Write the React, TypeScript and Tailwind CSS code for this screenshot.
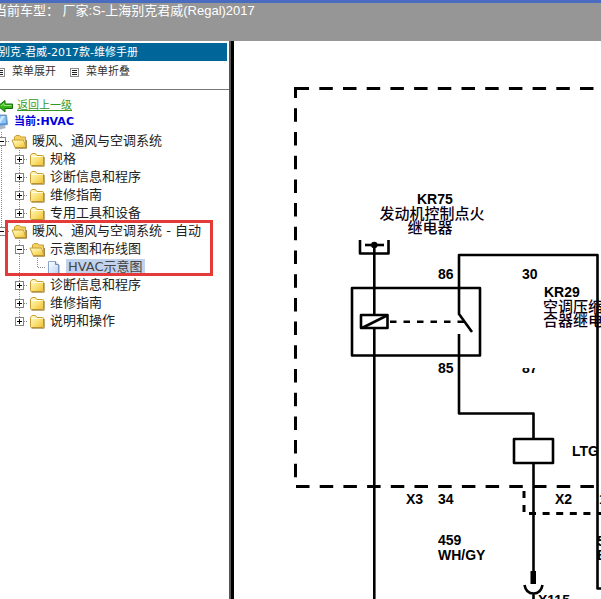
type Line = 'none' | 'full' | 'tee' | 'elbow';
type NodeKind = 'open' | 'closed';

function Cell({ line, toggle }: { line: Line; toggle?: 'plus' | 'minus' }) {
  return (
    <svg width="18" height="18" viewBox="0 0 18 18" shapeRendering="crispEdges" className="shrink-0" aria-hidden="true">
      <g stroke="#8a8a8a" strokeDasharray="1 1" fill="none">
        {line !== 'none' && <path d={line === 'elbow' ? 'M9.5 0V9' : 'M9.5 0V18'} />}
        {(line === 'tee' || line === 'elbow') && <path d="M10 9.5H18" />}
      </g>
      {toggle && (
        <>
          <rect x="5.5" y="5.5" width="8" height="8" fill="#fff" stroke="#848484" />
          <path d="M7 9.5H12" stroke="#000" />
          {toggle === 'plus' && <path d="M9.5 7V12" stroke="#000" />}
        </>
      )}
    </svg>
  );
}

function FolderIcon({ kind }: { kind: NodeKind }) {
  return (
    <svg width="18" height="18" viewBox="0 0 18 18" className="shrink-0" aria-hidden="true">
      <defs>
        <linearGradient id="folder" x1="0" y1="0" x2="1" y2="1">
          <stop offset="0" stopColor="#fffbd0" />
          <stop offset="0.5" stopColor="#fbe37a" />
          <stop offset="1" stopColor="#efc02f" />
        </linearGradient>
      </defs>
      {kind === 'closed' ? (
        <>
          <path d="M2.500 5.5L4 3.500H7.5L9 5.5H14.500Q15.500 5.5 15.500 6.5V14.500Q15.500 15.500 14.500 15.500H3.500Q2.500 15.500 2.500 14.500Z" fill="url(#folder)" stroke="#c79e38" />
          <path d="M3.500 6.500H14.500" stroke="#fffde6" />
          <path d="M3.500 16.200H16.200V7" stroke="#8a6a1c" fill="none" strokeWidth="0.8" />
        </>
      ) : (
        <>
          <path d="M4.500 14V5L6 3.500H9.500L11 5H15.500V8" fill="#f3d060" stroke="#c79e38" />
          <path d="M15.500 7.500V15" stroke="#c79e38" />
          <path d="M2 8H13.500L16 15.500H5Z" fill="url(#folder)" stroke="#c79e38" strokeLinejoin="round" />
          <path d="M5 16.300H16.500V8" stroke="#8a6a1c" fill="none" strokeWidth="0.8" />
        </>
      )}
    </svg>
  );
}

function PageIcon() {
  return (
    <svg width="18" height="18" viewBox="0 0 18 18" className="shrink-0" aria-hidden="true">
      <defs>
        <linearGradient id="page" x1="0" y1="0" x2="1" y2="1">
          <stop offset="0" stopColor="#ffffff" />
          <stop offset="1" stopColor="#bcd4f4" />
        </linearGradient>
      </defs>
      <path d="M2.5 3.5H9.5L12.5 6.5V15.5H2.5Z" fill="url(#page)" stroke="#8ba6cf" />
      <path d="M9.5 3.5V6.5H12.5" fill="#dfeafc" stroke="#6885b8" />
      <path d="M2.5 16H13V7" fill="none" stroke="#5f79a8" strokeWidth="0.8" />
    </svg>
  );
}

function ListIcon() {
  return (
    <svg width="9" height="9" viewBox="0 0 9 9" shapeRendering="crispEdges" className="shrink-0" aria-hidden="true">
      <rect x="0.5" y="0.5" width="8" height="8" fill="#fff" stroke="#8c8c8c" />
      <path d="M2 2.5H7M2 4.5H7M2 6.5H7" stroke="#222" />
    </svg>
  );
}

function RootRow({ label, last }: { label: string; last?: boolean }) {
  return (
    <div className="flex items-center">
      <button type="button" aria-label={label} className="shrink-0">
        <Cell line={last ? 'elbow' : 'tee'} toggle="minus" />
      </button>
      <FolderIcon kind="open" />
      <a href="#" className="ml-1 whitespace-nowrap">{label}</a>
    </div>
  );
}

function ChildRow({ label, rail, last, open }: { label: string; rail: Line; last?: boolean; open?: boolean }) {
  return (
    <div className="flex items-center">
      <Cell line={rail} />
      <button type="button" aria-label={label} className="shrink-0">
        <Cell line={last ? 'elbow' : 'tee'} toggle={open ? 'minus' : 'plus'} />
      </button>
      <FolderIcon kind={open ? 'open' : 'closed'} />
      <a href="#" className="ml-1 whitespace-nowrap">{label}</a>
    </div>
  );
}

const hvacChildren = ['规格', '诊断信息和程序', '维修指南', '专用工具和设备'];
const autoChildren = ['诊断信息和程序', '维修指南', '说明和操作'];

function Sidebar() {
  return (
    <aside className="w-[229px] shrink-0 overflow-hidden bg-white font-['DejaVu_Sans','Noto_Sans_CJK_SC',sans-serif] text-[11px] leading-4 text-[#333]">
      <div className="mt-0.5 mr-0.5 h-[18px] bg-[#006699] leading-5 text-white">
        <h1 className="-ml-px whitespace-nowrap">别克-君威-2017款-维修手册</h1>
      </div>
      <div className="-ml-1 flex h-[29px] items-center gap-3.5 border-b border-[#777] pb-1.5 whitespace-nowrap">
        <button type="button" className="flex items-center gap-[7px]">
          <ListIcon />
          菜单展开
        </button>
        <button type="button" className="flex items-center gap-[7px]">
          <ListIcon />
          菜单折叠
        </button>
      </div>

      <nav className="-ml-2 pt-2">
        <div className="flex items-center gap-1">
          <svg width="21" height="16" viewBox="0 0 21 16" aria-hidden="true">
            <path d="M6 8L13 2.5V6H20.500V10.500H13V14Z" fill="#35b515" stroke="#176b08" />
            <path d="M9 8L12 5.500V7.500H19.500" stroke="#9be77c" fill="none" />
          </svg>
          <a href="#" className="text-[#339922] underline">返回上一级</a>
        </div>
        <div className="flex items-center gap-1.5 font-bold text-[#0000dd]">
          <svg width="16" height="16" viewBox="0 0 16 16" aria-hidden="true">
            <path d="M1 1H14.500L15.500 10.500L9 12L1 11Z" fill="#4f95dd" stroke="#7d9cc4" />
            <path d="M2 2H13.500L14 9L2 10Z" fill="#8fc6f7" />
            <path d="M10 2H13L8 9.500H5Z" fill="#cde8ff" />
            <path d="M6 12L12 11L14 14L8 15.500Z" fill="#a9b6c8" />
          </svg>
          当前:HVAC
        </div>

        <div className="mt-0.5 text-[13px] leading-[18px] text-[#222]">
          <RootRow label="暖风、通风与空调系统" />
          {hvacChildren.map((label, i) => (
            <ChildRow key={label} label={label} rail="full" last={i === hvacChildren.length - 1} />
          ))}
          <div className="relative">
            <RootRow label="暖风、通风与空调系统 - 自动" last />
            <ChildRow label="示意图和布线图" rail="none" open />
            <div className="flex items-center">
              <Cell line="none" />
              <Cell line="full" />
              <Cell line="elbow" />
              <PageIcon />
              <a href="#" className="ml-0.5 h-4 bg-[#c0d2ec] px-0.5 leading-4 whitespace-nowrap text-[#444]">HVAC示意图</a>
            </div>
            <div className="pointer-events-none absolute -top-0.5 right-4 bottom-0 left-[13px] border-3 border-[#e53a3a]" />
          </div>
          {autoChildren.map((label, i) => (
            <ChildRow key={label} label={label} rail="none" last={i === autoChildren.length - 1} />
          ))}
        </div>
      </nav>
    </aside>
  );
}

function WiringDiagram() {
  return (
    <svg
      width="720"
      height="900"
      viewBox="234 41 720 900"
      role="img"
      aria-label="HVAC示意图"
      className="block max-w-none font-['Liberation_Sans','Noto_Sans_CJK_SC',sans-serif]"
    >
      <clipPath id="pin87">
        <rect x="515" y="368" width="40" height="8" />
      </clipPath>

      {/* module outline */}
      <g fill="none" stroke="#000" strokeWidth="3">
        <path d="M295.500 98V88.500H309" />
        <path d="M319.300 88.500H950" strokeDasharray="13.500 10.200" />
        <path d="M295.500 108.300V478" strokeDasharray="13.500 10.200" />
        <path d="M296 486.500H950" strokeDasharray="13.500 10.200" />
        <path d="M524 491V498M524 505V512" />
        <path d="M529 513.500H950" strokeDasharray="7 6.600" />
      </g>

      {/* wires */}
      <g fill="none" stroke="#000" strokeWidth="2.600" strokeLinejoin="round">
        <path d="M360 240V253.500H388.500V240" />
        <path d="M365 245H384" />
        <path d="M374.300 245V315M374.300 328V900" />
        <rect x="352" y="288" width="128" height="67.500" />
        <rect x="361" y="315" width="26.500" height="13" />
        <path d="M362 328L387 315.500" />
        <path d="M390 321.800H465" strokeDasharray="6.500 7" />
        <path d="M472 332L459 314V255H597.500V588.500H950" />
        <path d="M459 334V413.500H533.500V439" />
        <rect x="514" y="439" width="39" height="24" />
        <path d="M533.500 463V572" />
        <path d="M524.500 585Q526 593.500 533.500 593.500Q541 593.500 542.500 585M533.500 593V900" />
      </g>
      <circle cx="374.300" cy="245" r="3.200" />
      <rect x="530.500" y="571" width="5.500" height="13" />

      <g fontSize="14" fontWeight="700">
        <text x="417" y="204">KR75</text>
        <text x="438" y="279">86</text>
        <text x="522" y="279">30</text>
        <text x="544" y="297">KR29</text>
        <text x="438" y="373">85</text>
        <text x="522" y="373" clipPath="url(#pin87)">87</text>
        <text x="572" y="456">LTG</text>
        <text x="406" y="504">X3</text>
        <text x="438" y="504">34</text>
        <text x="555" y="504">X2</text>
        <text x="599" y="504">14</text>
        <text x="438" y="545">459</text>
        <text x="438" y="560">WH/GY</text>
        <text x="597" y="546">59</text>
        <text x="597" y="560">BK</text>
        <text x="538" y="605">X115</text>
      </g>
      <g fontSize="15" fontWeight="500" fill="#0c0010">
        <text x="432" y="219" textAnchor="middle">发动机控制点火</text>
        <text x="430" y="233" textAnchor="middle">继电器</text>
        <text x="543" y="312">空调压缩机离</text>
        <text x="543" y="326">合器继电器</text>
      </g>
    </svg>
  );
}

export default function App() {
  return (
    <div className="flex h-screen flex-col overflow-hidden bg-white">
      <header className="h-[41px] shrink-0 border-t-3 border-[#4a6cc0] bg-[#969696] font-['Liberation_Sans','Noto_Sans_CJK_SC',sans-serif] text-[13px] leading-4 text-white">
        <p className="-ml-1.5 whitespace-nowrap">当前车型： 厂家:S-上海别克君威(Regal)2017</p>
      </header>
      <div className="flex min-h-0 flex-1">
        <Sidebar />
        <div className="w-0.5 shrink-0 bg-[#555]" />
        <main className="min-w-0 flex-1 overflow-hidden border-l-3 border-black bg-white">
          <WiringDiagram />
        </main>
      </div>
    </div>
  );
}
